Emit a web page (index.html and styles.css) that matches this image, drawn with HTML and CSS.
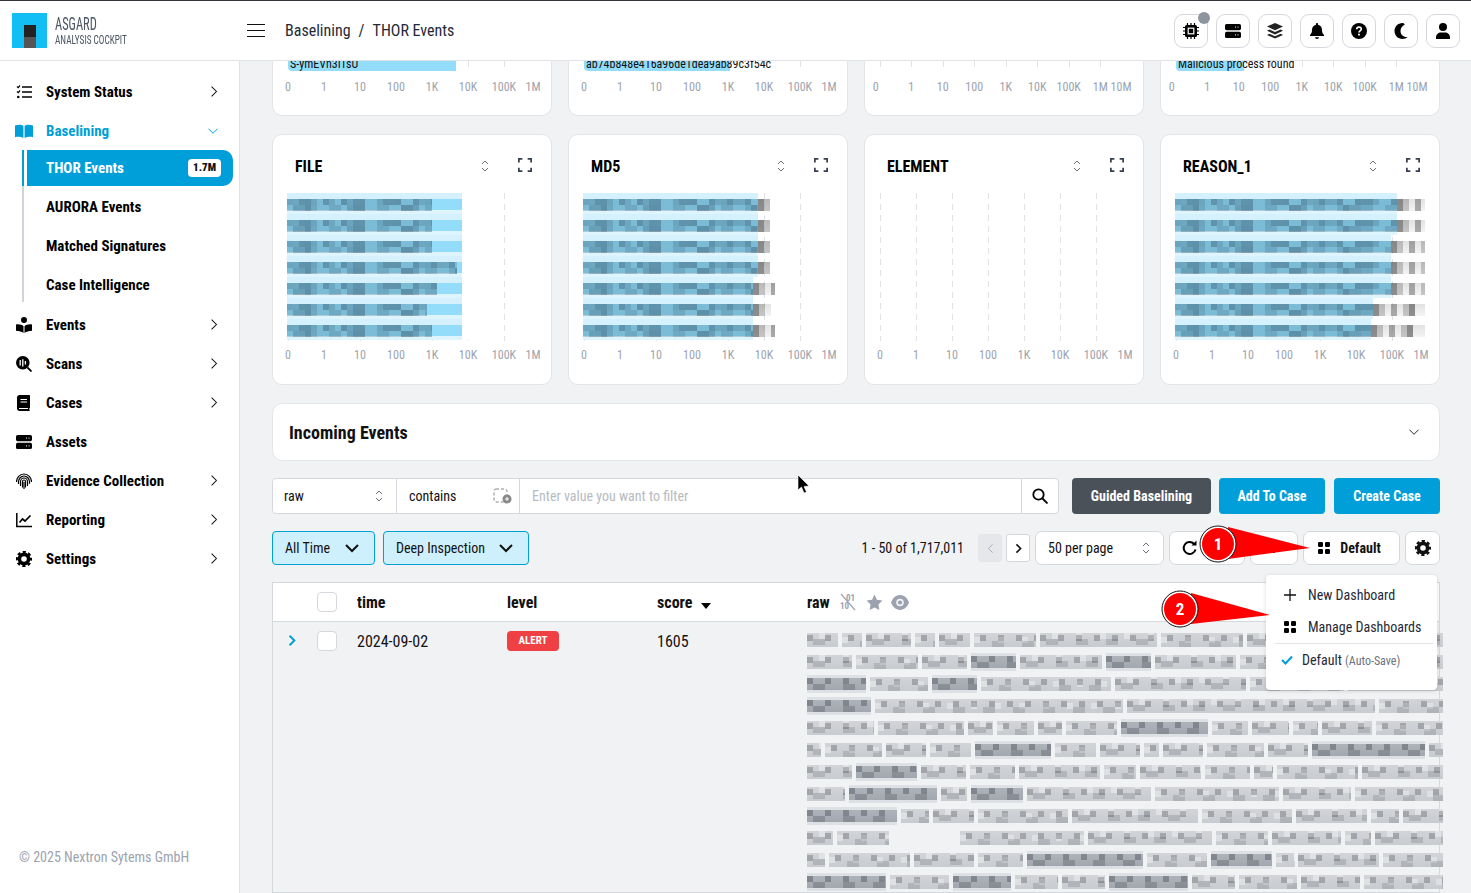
FILE: index.html
```html
<!DOCTYPE html>
<html lang="en">
<head>
  <meta charset="UTF-8">
  <title>Asgard Analysis Cockpit - THOR Events</title>
  <link rel="stylesheet" href="styles.css">
</head>
<body>
  <svg class="sprite" width="0" height="0">
    <symbol id="chev-right" viewBox="0 0 10 16"><path d="M2 2l6 6-6 6" fill="none" stroke="currentColor" stroke-width="1.3"/></symbol>
    <symbol id="chev-right-b" viewBox="0 0 10 16"><path d="M2 2l6 6-6 6" fill="none" stroke="currentColor" stroke-width="2.4"/></symbol>
    <symbol id="chev-down" viewBox="0 0 16 10"><path d="M2 2l6 6 6-6" fill="none" stroke="currentColor" stroke-width="1.3"/></symbol>
    <symbol id="chev-bold" viewBox="0 0 16 10"><path d="M2 2l6 6 6-6" fill="none" stroke="currentColor" stroke-width="2"/></symbol>
    <symbol id="updown" viewBox="0 0 10 16"><path d="M2 6l3-3 3 3M2 10l3 3 3-3" fill="none" stroke="currentColor" stroke-width="1"/></symbol>
    <symbol id="expand" viewBox="0 0 16 16"><path d="M1 5V1h4M11 1h4v4M15 11v4h-4M5 15H1v-4" fill="none" stroke="currentColor" stroke-width="2"/></symbol>
    <symbol id="gear" viewBox="0 0 16 16"><circle cx="8" cy="8" r="4.6" fill="none" stroke="currentColor" stroke-width="3.6"/><circle cx="8" cy="8" r="7" fill="none" stroke="currentColor" stroke-width="2.4" stroke-dasharray="3.1 2.4" stroke-dashoffset="1.5"/></symbol>
    <symbol id="server" viewBox="0 0 16 14"><rect x="0" y="0" width="16" height="6.2" rx="1.6" fill="currentColor"/><rect x="0" y="7.8" width="16" height="6.2" rx="1.6" fill="currentColor"/><path d="M10 3.1h1M12.5 3.1h1M10 10.9h1M12.5 10.9h1" stroke="#fff" stroke-width="1"/></symbol>
    <symbol id="grid" viewBox="0 0 12 12"><rect width="5" height="5" rx="1.2" fill="currentColor"/><rect x="7" width="5" height="5" rx="1.2" fill="currentColor"/><rect y="7" width="5" height="5" rx="1.2" fill="currentColor"/><rect x="7" y="7" width="5" height="5" rx="1.2" fill="currentColor"/></symbol>
  </svg>

  <header class="topbar">
    <div class="logo">
      <div class="logo-mark"><span></span></div>
      <div class="logo-text">
        <div class="logo-name">ASGARD</div>
        <div class="logo-sub">ANALYSIS COCKPIT</div>
      </div>
    </div>
    <div class="hamburger"><span></span><span></span><span></span></div>
    <div class="crumbs"><span>Baselining</span><span>/</span><span>THOR Events</span></div>
    <div class="top-actions">
      <button class="top-btn has-dot">
        <svg width="16" height="16" viewBox="0 0 16 16"><path d="M4.5 0v16M8 0v16M11.5 0v16M0 4.5h16M0 8h16M0 11.5h16" stroke="#000" stroke-width="1.2"/><rect x="2" y="2" width="12" height="12" rx="1.5" fill="#000"/><rect x="4.6" y="4.6" width="6.8" height="6.8" fill="#fff"/><rect x="5.8" y="5.8" width="4.4" height="4.4" fill="#000"/></svg>
      </button>
      <button class="top-btn"><svg width="16" height="14"><use href="#server"/></svg></button>
      <button class="top-btn">
        <svg width="16" height="16" viewBox="0 0 16 16"><path d="M8 0l8 3.6-8 3.6L0 3.6z" fill="#222"/><path d="M2.4 6.6L8 9.1l5.6-2.5L16 7.8l-8 3.6-8-3.6zM2.4 10.8L8 13.3l5.6-2.5 2.4 1.2L8 15.6 0 12z" fill="#222"/></svg>
      </button>
      <button class="top-btn">
        <svg width="14" height="16" viewBox="0 0 14 16"><path d="M7 0c.6 0 1 .4 1 1v.7c2.500.5 4 2.500 4 5 0 3 .8 4 2 5.300v1H0v-1c1.200-1.300 2-2.300 2-5.300 0-2.500 1.500-4.500 4-5V1c0-.6.4-1 1-1z" fill="#000"/><path d="M5 14.300h4a2 1.700 0 0 1-4 0z" fill="#000"/></svg>
      </button>
      <button class="top-btn">
        <svg width="16" height="16" viewBox="0 0 16 16"><circle cx="8" cy="8" r="8" fill="#000"/><path d="M5.700 6.200c0-1.300 1-2.100 2.300-2.100s2.300.8 2.300 2c0 1.800-2.300 1.700-2.300 3.400" fill="none" stroke="#fff" stroke-width="1.600"/><rect x="7.100" y="10.700" width="1.800" height="1.800" fill="#fff"/></svg>
      </button>
      <button class="top-btn">
        <svg width="14" height="16" viewBox="0 0 14 16"><path d="M8.500 0C4 0 .5 3.600.5 8s3.500 8 8 8c2 0 3.800-.8 5.200-2-4 .6-7.200-2.200-7.200-6 0-3 1.800-5.300 4.300-6.600C10 .5 9.300 0 8.500 0z" fill="#000"/></svg>
      </button>
      <button class="top-btn">
        <svg width="14" height="16" viewBox="0 0 14 16"><circle cx="7" cy="4" r="4" fill="#000"/><path d="M0 16v-1.500C0 11.500 2.300 9.500 5 9.500h4c2.700 0 5 2 5 5V16z" fill="#000"/></svg>
      </button>
    </div>
  </header>

  <div class="layout">
    <aside class="sidebar">
      <nav class="nav">
        <a class="nav-item">
          <svg class="nav-icon" viewBox="0 0 16 16"><path d="M1 2.500l1.200 1.200L4 1.500M1 7.500l1.200 1.200L4 6.500" fill="none" stroke="#000" stroke-width="1.200"/><circle cx="2.300" cy="13" r="1.300"/><path d="M6 3h10M6 8h10M6 13h10" stroke="#000" stroke-width="1.700"/></svg>
          <span>System Status</span>
          <svg class="nav-arrow"><use href="#chev-right"/></svg>
        </a>
        <a class="nav-item is-open">
          <svg class="nav-icon wide" viewBox="0 0 18 14"><path d="M0 1.500C3 .3 6.500.3 8.400 1.800V14C6 12.700 3 12.600 0 13.200zM18 1.500C15 .3 11.500.3 9.600 1.800V14c2.400-1.300 5.400-1.400 8.400-.8z" fill="#009fd9"/></svg>
          <span>Baselining</span>
          <svg class="nav-arrow down"><use href="#chev-down"/></svg>
        </a>
        <div class="subnav">
          <a class="sub-item active"><span>THOR Events</span><b class="count">1.7M</b></a>
          <a class="sub-item"><span>AURORA Events</span></a>
          <a class="sub-item"><span>Matched Signatures</span></a>
          <a class="sub-item"><span>Case Intelligence</span></a>
        </div>
        <a class="nav-item">
          <svg class="nav-icon" viewBox="0 0 16 16"><circle cx="8" cy="3" r="3"/><path d="M0 7.500c3-.5 6 .2 7.500 1.800V16C5.500 14.500 3 14 .8 14 .3 14 0 13.700 0 13.300zM16 7.500c-3-.5-6 .2-7.500 1.800V16c2-1.500 4.500-2 6.700-2 .5 0 .8-.3.800-.7z"/></svg>
          <span>Events</span>
          <svg class="nav-arrow"><use href="#chev-right"/></svg>
        </a>
        <a class="nav-item">
          <svg class="nav-icon" viewBox="0 0 16 16"><circle cx="6.800" cy="6.800" r="6.800"/><path d="M4.200 4v5.600M6.800 3.200v7.200M9.400 5v3.600" stroke="#fff" stroke-width="1.300"/><path d="M11.500 11.500l4 4" stroke="#000" stroke-width="1.800"/></svg>
          <span>Scans</span>
          <svg class="nav-arrow"><use href="#chev-right"/></svg>
        </a>
        <a class="nav-item">
          <svg class="nav-icon" viewBox="0 0 16 16"><path d="M3.500 0H13c.6 0 1 .4 1 1v11.500c0 .5-.3.800-.7 1v1.500c.4 0 .7.300.7.500s-.3.500-.7.500H3.500C2.100 16 1 14.900 1 13.500V2.500C1 1.100 2.100 0 3.500 0z"/><path d="M4.500 4.500h6.500M4.500 7h6.500" stroke="#fff" stroke-width="1.200"/><path d="M3 13.500h9" stroke="#fff" stroke-width="1"/></svg>
          <span>Cases</span>
          <svg class="nav-arrow"><use href="#chev-right"/></svg>
        </a>
        <a class="nav-item">
          <svg class="nav-icon"><use href="#server"/></svg>
          <span>Assets</span>
        </a>
        <a class="nav-item">
          <svg class="nav-icon" viewBox="0 0 16 16" fill="none" stroke="#000" stroke-width="1.200"><path d="M.5 9C.5 4.500 3.800 1 8 1s7.500 3.500 7.500 8"/><path d="M2.500 11V8.800C2.500 5.700 5 3 8 3s5.500 2.700 5.500 5.800v2"/><path d="M4.500 13V8.800C4.500 6.800 6 5 8 5s3.500 1.800 3.500 3.800V13"/><path d="M6.500 14.500V8.800C6.500 7.800 7.200 7 8 7s1.500.8 1.500 1.800V14.500"/><path d="M8 9v7"/></svg>
          <span>Evidence Collection</span>
          <svg class="nav-arrow"><use href="#chev-right"/></svg>
        </a>
        <a class="nav-item">
          <svg class="nav-icon" viewBox="0 0 16 16" fill="none" stroke="#000"><path d="M.8 1v13.500H16" stroke-width="1.500"/><path d="M3.500 10.500l3-3.500 2.500 2 5.500-5.500" stroke-width="1.700"/></svg>
          <span>Reporting</span>
          <svg class="nav-arrow"><use href="#chev-right"/></svg>
        </a>
        <a class="nav-item">
          <svg class="nav-icon"><use href="#gear"/></svg>
          <span>Settings</span>
          <svg class="nav-arrow"><use href="#chev-right"/></svg>
        </a>
      </nav>
      <div class="copyright">© 2025 Nextron Sytems GmbH</div>
    </aside>

    <main class="main">
      <section class="cards cards-top">
        <div class="card card-cut">
          <div class="plot"><div class="cut-bar bar-a">S-ymEVn3ITsU</div></div>
          <div class="axis"><span>0</span><span>1</span><span>10</span><span>100</span><span>1K</span><span>10K</span><span>100K</span><span>1M</span></div>
        </div>
        <div class="card card-cut">
          <div class="plot"><div class="cut-bar bar-b">ab74b848e416a96de1dea9ab89c3f54c</div></div>
          <div class="axis"><span>0</span><span>1</span><span>10</span><span>100</span><span>1K</span><span>10K</span><span>100K</span><span>1M</span></div>
        </div>
        <div class="card card-cut">
          <div class="plot tight"></div>
          <div class="axis tight"><span>0</span><span>1</span><span>10</span><span>100</span><span>1K</span><span>10K</span><span>100K</span><span>1M</span><span>10M</span></div>
        </div>
        <div class="card card-cut">
          <div class="plot tight"><div class="cut-bar bar-c">Malicious process found</div></div>
          <div class="axis tight"><span>0</span><span>1</span><span>10</span><span>100</span><span>1K</span><span>10K</span><span>100K</span><span>1M</span><span>10M</span></div>
        </div>
      </section>

      <section class="cards">
        <div class="card">
          <div class="card-head">
            <h3>FILE</h3>
            <svg class="sort"><use href="#updown"/></svg>
            <svg class="expand"><use href="#expand"/></svg>
          </div>
          <div class="plot tall">
            <div class="bars masked">
              <div class="bar"><div class="fill" style="width:175px"><i style="width:145px"></i></div></div>
              <div class="bar"><div class="fill" style="width:175px"><i style="width:145px"></i></div></div>
              <div class="bar"><div class="fill" style="width:175px"><i style="width:145px"></i></div></div>
              <div class="bar"><div class="fill" style="width:175px"><i style="width:170px"></i></div></div>
              <div class="bar"><div class="fill" style="width:175px"><i style="width:150px"></i></div></div>
              <div class="bar"><div class="fill" style="width:175px"><i style="width:140px"></i></div></div>
              <div class="bar"><div class="fill" style="width:175px"><i style="width:145px"></i></div></div>
            </div>
          </div>
          <div class="axis"><span>0</span><span>1</span><span>10</span><span>100</span><span>1K</span><span>10K</span><span>100K</span><span>1M</span></div>
        </div>

        <div class="card">
          <div class="card-head">
            <h3>MD5</h3>
            <svg class="sort"><use href="#updown"/></svg>
            <svg class="expand"><use href="#expand"/></svg>
          </div>
          <div class="plot tall">
            <div class="bars">
              <div class="bar"><div class="fill" style="width:175px"><i style="width:175px"></i></div><div class="tail" style="width:12px"></div></div>
              <div class="bar"><div class="fill" style="width:175px"><i style="width:175px"></i></div><div class="tail" style="width:12px"></div></div>
              <div class="bar"><div class="fill" style="width:175px"><i style="width:175px"></i></div><div class="tail" style="width:12px"></div></div>
              <div class="bar"><div class="fill" style="width:175px"><i style="width:175px"></i></div><div class="tail" style="width:12px"></div></div>
              <div class="bar"><div class="fill" style="width:170px"><i style="width:170px"></i></div><div class="tail" style="width:22px"></div></div>
              <div class="bar"><div class="fill" style="width:170px"><i style="width:170px"></i></div><div class="tail" style="width:18px"></div></div>
              <div class="bar"><div class="fill" style="width:170px"><i style="width:170px"></i></div><div class="tail" style="width:22px"></div></div>
            </div>
          </div>
          <div class="axis"><span>0</span><span>1</span><span>10</span><span>100</span><span>1K</span><span>10K</span><span>100K</span><span>1M</span></div>
        </div>

        <div class="card">
          <div class="card-head">
            <h3>ELEMENT</h3>
            <svg class="sort"><use href="#updown"/></svg>
            <svg class="expand"><use href="#expand"/></svg>
          </div>
          <div class="plot tall"></div>
          <div class="axis"><span>0</span><span>1</span><span>10</span><span>100</span><span>1K</span><span>10K</span><span>100K</span><span>1M</span></div>
        </div>

        <div class="card">
          <div class="card-head">
            <h3>REASON_1</h3>
            <svg class="sort"><use href="#updown"/></svg>
            <svg class="expand"><use href="#expand"/></svg>
          </div>
          <div class="plot tall">
            <div class="bars">
              <div class="bar"><div class="fill" style="width:222px"><i style="width:222px"></i></div><div class="tail" style="width:28px"></div></div>
              <div class="bar"><div class="fill" style="width:222px"><i style="width:222px"></i></div><div class="tail" style="width:28px"></div></div>
              <div class="bar"><div class="fill" style="width:216px"><i style="width:216px"></i></div><div class="tail" style="width:34px"></div></div>
              <div class="bar"><div class="fill" style="width:216px"><i style="width:216px"></i></div><div class="tail" style="width:34px"></div></div>
              <div class="bar"><div class="fill" style="width:216px"><i style="width:216px"></i></div><div class="tail" style="width:34px"></div></div>
              <div class="bar"><div class="fill" style="width:198px"><i style="width:198px"></i></div><div class="tail" style="width:52px"></div></div>
              <div class="bar"><div class="fill" style="width:196px"><i style="width:196px"></i></div><div class="tail" style="width:54px"></div></div>
            </div>
          </div>
          <div class="axis"><span>0</span><span>1</span><span>10</span><span>100</span><span>1K</span><span>10K</span><span>100K</span><span>1M</span></div>
        </div>
      </section>

      <section class="incoming">
        <h2>Incoming Events</h2>
        <svg class="incoming-chev"><use href="#chev-down"/></svg>
      </section>

      <section class="filter-row">
        <div class="filter">
          <div class="filter-field field-a"><span>raw</span><svg class="sort"><use href="#updown"/></svg></div>
          <div class="filter-field field-b">
            <span>contains</span>
            <svg class="add-icon" width="20" height="16" viewBox="0 0 20 16"><rect x="1" y="1" width="13" height="13" rx="2" fill="none" stroke="#888" stroke-dasharray="3 2"/><circle cx="14" cy="11" r="4.500" fill="#888"/><path d="M12 11h4M14 9v4" stroke="#fff"/></svg>
          </div>
          <div class="filter-input">Enter value you want to filter</div>
          <div class="filter-search">
            <svg width="16" height="16" viewBox="0 0 16 16" fill="none" stroke="#000" stroke-width="1.800"><circle cx="6.500" cy="6.500" r="5.200"/><path d="M10.500 10.500l5 5"/></svg>
          </div>
        </div>
        <button class="action dark guided">Guided Baselining</button>
        <button class="action add">Add To Case</button>
        <button class="action create">Create Case</button>
      </section>

      <section class="tool-row">
        <button class="pick pick-time"><span>All Time</span><svg><use href="#chev-bold"/></svg></button>
        <button class="pick pick-deep"><span>Deep Inspection</span><svg><use href="#chev-bold"/></svg></button>
        <div class="pager">1 - 50 of 1,717,011</div>
        <button class="page-btn off"><svg><use href="#chev-right"/></svg></button>
        <button class="page-btn"><svg><use href="#chev-right-b"/></svg></button>
        <div class="tool per-page"><span>50 per page</span><svg class="sort"><use href="#updown"/></svg></div>
        <div class="tool reload">
          <svg width="16" height="16" viewBox="0 0 16 16" fill="none" stroke="#000" stroke-width="2"><path d="M13.500 9.500A6 6 0 1 1 12 3.800"/><path d="M14.500 .5v5h-5" fill="#000" stroke="none"/></svg>
        </div>
        <div class="tool more"><svg><use href="#chev-bold"/></svg></div>
        <div class="tool dash"><svg class="grid-icon"><use href="#grid"/></svg><b>Default</b></div>
        <div class="tool cog"><svg><use href="#gear"/></svg></div>
      </section>

      <section class="table">
        <div class="t-head">
          <div></div>
          <div><span class="check"></span></div>
          <div>time</div>
          <div>level</div>
          <div>score <svg class="caret" width="10" height="6" viewBox="0 0 10 6"><path d="M0 0h10L5 6z" fill="#000"/></svg></div>
          <div class="raw-head">raw
            <svg width="20" height="18" viewBox="0 0 20 18"><text x="8" y="8" class="bin">01</text><text x="2" y="16" class="bin">10</text><path d="M3 1l14 16" stroke="#9ca3af" stroke-width="1.200"/></svg>
            <svg width="17" height="17" viewBox="0 0 16 16"><path d="M8 .5l2.300 4.900 5.200.7-3.800 3.700.9 5.300L8 12.600l-4.600 2.500.9-5.300L.5 6.100l5.200-.7z" fill="#9ca3af"/></svg>
            <svg width="18" height="15" viewBox="0 0 17 14"><path d="M8.500 0C4.500 0 1.500 3 0 7c1.500 4 4.500 7 8.500 7s7-3 8.500-7c-1.500-4-4.500-7-8.500-7z" fill="#9ca3af"/><circle cx="8.500" cy="7" r="3.600" fill="#f1f2f4"/><circle cx="8.500" cy="7" r="2" fill="#9ca3af"/></svg>
          </div>
        </div>
        <div class="t-row">
          <div class="expander"><svg><use href="#chev-right-b"/></svg></div>
          <div><span class="check"></span></div>
          <div>2024-09-02</div>
          <div><span class="badge">ALERT</span></div>
          <div>1605</div>
          <div class="raw-cell">
            <div class="line"><i class="w2"></i><i class="w1"></i><i class="w3"></i><i class="w1"></i><i class="w2"></i><i class="w4"></i><i class="w6"></i><i class="w5"></i><i class="w3"></i><i class="w4"></i><i class="w5"></i></div>
            <div class="line"><i class="w3"></i><i class="w4"></i><i class="w3"></i><i class="hi w3"></i><i class="w5"></i><i class="hi w3"></i><i class="w5"></i><i class="w6"></i><i class="w5"></i></div>
            <div class="line"><i class="hi w3"></i><i class="w3"></i><i class="hi w2"></i><i class="w6"></i><i class="w6"></i><i class="w5"></i><i class="w5"></i></div>
            <div class="line"><i class="hi w4"></i><i class="w7"></i><i class="w7"></i><i class="w4"></i></div>
            <div class="line"><i class="w4"></i><i class="w5"></i><i class="w1"></i><i class="w2"></i><i class="w1"></i><i class="w3"></i><i class="hi w5"></i><i class="w2"></i><i class="w2"></i><i class="w1"></i><i class="w3"></i><i class="w4"></i></div>
            <div class="line"><i class="w1"></i><i class="w4"></i><i class="w3"></i><i class="w3"></i><i class="hi w5"></i><i class="w3"></i><i class="w3"></i><i class="w1"></i><i class="w3"></i><i class="w4"></i><i class="w3"></i><i class="hi w6"></i><i class="w1"></i></div>
            <div class="line"><i class="w3"></i><i class="hi w4"></i><i class="w3"></i><i class="w3"></i><i class="w5"></i><i class="w2"></i><i class="w4"></i><i class="w3"></i><i class="w1"></i><i class="w5"></i><i class="w5"></i></div>
            <div class="line"><i class="w2"></i><i class="hi w5"></i><i class="w1"></i><i class="hi w3"></i><i class="w6"></i><i class="w6"></i><i class="w4"></i><i class="w5"></i></div>
            <div class="line"><i class="hi w5"></i><i class="w1"></i><i class="w2"></i><i class="w5"></i><i class="w6"></i><i class="w5"></i><i class="w4"></i><i class="w1"></i><i class="w2"></i></div>
            <div class="line"><i class="w1"></i><i class="w3"></i><i class="gap"></i><i class="w6"></i><i class="w6"></i><i class="w3"></i><i class="w4"></i><i class="w1"></i><i class="w4"></i></div>
            <div class="line"><i class="w1"></i><i class="w5"></i><i class="w4"></i><i class="w3"></i><i class="hi w6"></i><i class="w4"></i><i class="hi w4"></i><i class="w1"></i><i class="w5"></i><i class="w4"></i></div>
            <div class="line"><i class="hi w5"></i><i class="w4"></i><i class="hi w4"></i><i class="w3"></i><i class="w3"></i><i class="hi w5"></i><i class="w3"></i><i class="w4"></i><i class="w4"></i><i class="w5"></i></div>
          </div>
        </div>
      </section>
    </main>
  </div>

  <div class="dash-menu">
    <div class="menu-item"><svg width="12" height="12" viewBox="0 0 12 12"><path d="M6 0v12M0 6h12" stroke="#111" stroke-width="1.300"/></svg><span>New Dashboard</span></div>
    <div class="menu-item"><svg class="grid-icon"><use href="#grid"/></svg><span>Manage Dashboards</span></div>
    <div class="menu-default">
      <svg width="12" height="10" viewBox="0 0 12 10"><path d="M1 5l3.500 3.500L11 1.500" fill="none" stroke="#009fd9" stroke-width="2"/></svg>
      <span>Default <small>(Auto-Save)</small></span>
    </div>
  </div>

  <!-- hand drawn annotations from the screenshot -->
  <svg class="callouts" width="1471" height="893" viewBox="0 0 1471 893">
    <polygon points="1228,527 1310,548 1228,559" fill="#f00"/>
    <circle cx="1218" cy="544" r="17" fill="#f00" stroke="#fff" stroke-width="2"/>
    <circle cx="1218" cy="544" r="18" fill="none" stroke="#111" stroke-width="1"/>
    <text x="1218" y="550" class="callout-num">1</text>
    <polygon points="1191,593 1270,615 1191,624" fill="#f00"/>
    <circle cx="1180" cy="609" r="17" fill="#f00" stroke="#fff" stroke-width="2"/>
    <circle cx="1180" cy="609" r="18" fill="none" stroke="#111" stroke-width="1"/>
    <text x="1180" y="615" class="callout-num">2</text>
    <path d="M798 475v15l3.500-3 2.500 6 2.500-1-2.500-5.500 5-.5z" fill="#000" stroke="#fff" stroke-width=".6"/>
  </svg>
</body>
</html>
```

FILE: styles.css
```css
* {
  box-sizing: border-box;
}

html,
body {
  height: 100%;
}

body {
  display: flex;
  flex-direction: column;
  width: 1471px;
  height: 893px;
  margin: 0;
  overflow: hidden;
  position: relative;
  background: #f1f2f4;
  color: #111;
  font-family: "Roboto Condensed", Roboto, "Liberation Sans Narrow", sans-serif;
  font-stretch: condensed;
  font-size: 14px;
}

button {
  font: inherit;
  font-stretch: inherit;
  cursor: pointer;
}

.sprite {
  position: absolute;
}

/* top bar */
.topbar {
  display: flex;
  align-items: center;
  height: 61px;
  flex: none;
  padding-left: 12px;
  background: #fff;
  border-top: 1px solid #33363b;
  border-bottom: 1px solid #e0e2e6;
}

.logo {
  display: flex;
  align-items: center;
  gap: 8px;
  width: 235px;
}

.logo-mark {
  display: flex;
  align-items: flex-end;
  justify-content: center;
  width: 35px;
  height: 35px;
  background: #13bef5;
}

.logo-mark span {
  width: 12px;
  height: 23px;
  background: linear-gradient(#222 0 12px, #555 12px);
}

.logo-text {
  color: #4b5563;
  font-family: "Liberation Sans Narrow", "Roboto Condensed", Roboto, sans-serif;
}

.logo-name {
  font-size: 18px;
  line-height: 18px;
  transform: scaleX(.69);
  transform-origin: left;
}

.logo-sub {
  font-size: 12.500px;
  line-height: 14px;
  transform: scaleX(.74);
  transform-origin: left;
}

.hamburger {
  display: flex;
  flex-direction: column;
  gap: 5px;
  width: 18px;
}

.hamburger span {
  height: 1px;
  border-top: 1.500px solid #111;
}

.crumbs {
  display: flex;
  gap: 8px;
  margin-left: 20px;
  font-size: 16px;
  color: #1f2937;
}

.top-actions {
  display: flex;
  gap: 8px;
  margin-left: auto;
  padding-right: 11px;
}

.top-btn {
  display: flex;
  align-items: center;
  justify-content: center;
  position: relative;
  width: 34px;
  height: 34px;
  padding: 0;
  background: #fff;
  border: 1px solid #d5d8dd;
  border-radius: 9px;
}

.has-dot::after {
  content: "";
  position: absolute;
  top: -3px;
  right: -3px;
  width: 12px;
  height: 12px;
  background: #8e95a0;
  border-radius: 50%;
}

/* sidebar */
.layout {
  display: flex;
  flex: 1;
  min-height: 0;
}

.sidebar {
  display: flex;
  flex-direction: column;
  flex: none;
  width: 240px;
  padding: 11px 0 28px;
  background: #fff;
  border-right: 1px solid #e0e2e6;
}

.nav-item,
.sub-item {
  display: flex;
  align-items: center;
  height: 39px;
  color: #000;
  font-size: 15px;
  font-weight: 700;
}

.nav-item {
  padding-left: 16px;
}

.nav-item > span {
  flex: 1;
  margin-left: 14px;
}

.nav-icon {
  width: 16px;
  height: 16px;
  flex: none;
  color: #000;
}

.nav-icon.wide {
  width: 18px;
  margin-left: -1px;
  margin-right: -1px;
}

.nav-arrow {
  width: 8px;
  height: 13px;
  margin-right: 21px;
  color: #111;
}

.nav-arrow.down {
  width: 12px;
  height: 8px;
  margin-right: 20px;
  color: #009fd9;
}

.is-open > span {
  color: #009fd9;
}

.subnav {
  display: flex;
  flex-direction: column;
  height: 152px;
  margin: 0 0 3px 22px;
  border-left: 2px solid #d1d5db;
}

.sub-item {
  padding-left: 22px;
  flex: none;
}

.sub-item.active {
  justify-content: space-between;
  height: 36px;
  margin: 0 6px 1px -2px;
  padding: 0 12px 0 19px;
  color: #fff;
  background: #009fd9;
  border-left: 2px solid #009fd9;
  box-shadow: inset 3px 0 0 #fff;
  border-radius: 0 10px 10px 0;
}

.sub-item.active span {
  margin-left: 3px;
}

.count {
  padding: 2px 5px;
  color: #111;
  font-size: 11px;
  line-height: 14px;
  background: #fff;
  border-radius: 4px;
}

.copyright {
  margin-top: auto;
  padding-left: 19px;
  color: #9ca3af;
  font-size: 14px;
}

/* main column */
.main {
  display: flex;
  flex-direction: column;
  flex: 1;
  min-width: 0;
  padding: 0 31px 0 32px;
  overflow: hidden;
}

.cards {
  display: grid;
  grid-template-columns: repeat(4, 280px);
  gap: 16px;
  flex: none;
}

.cards-top {
  margin-bottom: 18px;
}

.card {
  height: 251px;
  padding: 0 12px 0 13px;
  background: #fff;
  border: 1px solid #e3e5e9;
  border-radius: 10px;
}

.card-cut {
  height: 55px;
  border-top: 0;
  border-radius: 0 0 10px 10px;
  overflow: hidden;
}

.card-head {
  display: flex;
  align-items: center;
  height: 58px;
  padding: 4px 0 0 9px;
}

.card-head h3 {
  flex: 1;
  margin: 0;
  font-size: 16px;
  font-weight: 700;
  color: #000;
}

.card-head .sort {
  margin-right: 1px;
}

.sort {
  width: 10px;
  height: 16px;
  color: #6b7280;
}

.expand {
  width: 14px;
  height: 14px;
  margin: 0 7px 2px 27px;
  color: #374151;
}

/* dashed scale lines behind the bars */
.plot {
  position: relative;
  height: 10px;
}

.plot.tall {
  height: 148px;
}

.plot::before {
  content: "";
  position: absolute;
  top: 0;
  bottom: 0;
  left: 2px;
  right: 0;
  background: repeating-linear-gradient(to right, #dfe2e6 0 1px, transparent 1px 36px);
  -webkit-mask: repeating-linear-gradient(to bottom, #000 0 6px, transparent 6px 11px);
  mask: repeating-linear-gradient(to bottom, #000 0 6px, transparent 6px 11px);
}

.plot.tight::before {
  background: repeating-linear-gradient(to right, #dfe2e6 0 1px, transparent 1px 31.500px);
}

.cut-bar {
  position: relative;
  height: 10px;
  margin-left: 2px;
  padding-left: 2px;
  color: #111;
  font-size: 12px;
  line-height: 6px;
  white-space: nowrap;
  border-radius: 0 0 4px 4px;
}

.bar-a {
  background: linear-gradient(to right, #93ddfa 168px, transparent 168px);
}

.bar-b {
  background: linear-gradient(to right, #93ddfa 146px, transparent 146px);
}

.bar-c {
  background: linear-gradient(to right, #93ddfa 68px, transparent 68px);
}

.axis {
  display: flex;
  margin: 9px 0 0 -16px;
  color: #9ca3af;
  font-size: 12px;
  line-height: 14px;
}

.plot.tall + .axis {
  margin-top: 7px;
}

.axis span {
  flex: none;
  width: 36px;
  text-align: center;
}

.axis span:last-child {
  width: 22px;
}

.axis.tight {
  margin-left: -14px;
}

.axis.tight span {
  width: 31.500px;
}

.axis.tight span:first-child {
  width: 35.500px;
  margin-left: -4px;
  padding-right: 4px;
}

.axis.tight span:last-child {
  width: 22px;
  margin-left: -6px;
}

.bars {
  position: relative;
  filter: blur(.4px);
}

.bars.masked {
  width: 215px;
  background: #fff;
}

.bar {
  display: flex;
  height: 21px;
  margin-left: 1px;
}

.fill {
  height: 21px;
  background:
    linear-gradient(rgba(255, 255, 255, .6) 0 6px, transparent 6px 17px, rgba(255, 255, 255, .7) 17px),
    #93ddfa;
}

/* pixelated text laid on a bar */
.fill i {
  display: block;
  height: 12px;
  position: relative;
  top: 6px;
  background-image:
    repeating-linear-gradient(90deg, rgba(35, 60, 80, .18) 0 6px, transparent 6px 18px),
    repeating-linear-gradient(90deg, rgba(35, 60, 80, .16) 0 12px, transparent 12px 30px),
    repeating-linear-gradient(90deg, rgba(35, 60, 80, .18) 0 18px, transparent 18px 42px),
    repeating-linear-gradient(90deg, transparent 0 6px, rgba(35, 60, 80, .22) 6px 24px, transparent 24px 54px),
    repeating-linear-gradient(90deg, rgba(35, 60, 80, .15) 0 12px, transparent 12px 24px),
    linear-gradient(rgba(60, 100, 120, .28), rgba(60, 100, 120, .28));
  background-position: 0 0, 6px 0, 12px 0, 0 6px, 18px 6px, 0 0;
  background-repeat: no-repeat;
  background-size: 100% 6px, 100% 6px, 100% 6px, 100% 6px, 100% 6px, 100% 12px;
}

.tail {
  height: 12px;
  margin-top: 6px;
  background-image:
    repeating-linear-gradient(90deg, rgba(60, 60, 60, .4) 0 6px, transparent 6px 18px),
    repeating-linear-gradient(90deg, rgba(60, 60, 60, .25) 0 12px, transparent 12px 30px),
    linear-gradient(rgba(190, 190, 190, .45), rgba(235, 235, 235, .6));
}

/* incoming events */
.incoming {
  display: flex;
  align-items: center;
  justify-content: space-between;
  flex: none;
  height: 58px;
  padding: 0 19px 0 16px;
  background: #fff;
  border: 1px solid #e3e5e9;
  border-radius: 10px;
}

.cards + .incoming {
  margin-top: 18px;
}

.incoming h2 {
  margin: 0;
  font-size: 18px;
  font-weight: 700;
  color: #111;
}

.incoming-chev {
  width: 12px;
  height: 8px;
  color: #222;
}

/* filter row */
.filter-row {
  display: flex;
  flex: none;
  height: 36px;
  margin-top: 17px;
  gap: 8px;
}

.filter {
  display: flex;
  width: 787px;
  margin-right: 5px;
  background: #fff;
  border: 1px solid #d5d8dd;
  border-radius: 4px;
}

.filter-field {
  display: flex;
  align-items: center;
  justify-content: space-between;
  padding: 0 12px 0 11px;
  border-right: 1px solid #d5d8dd;
}

.field-a {
  width: 124px;
}

.field-b {
  width: 123px;
  padding: 0 6px 0 12px;
}

.filter-input {
  flex: 1;
  padding: 0 12px;
  color: #b6bbc3;
  font-size: 14px;
  line-height: 34px;
}

.filter-search {
  display: flex;
  align-items: center;
  justify-content: center;
  width: 37px;
  border-left: 1px solid #d5d8dd;
}

.action {
  color: #fff;
  font-weight: 700;
  font-size: 14px;
  background: #009fd9;
  border: 0;
  border-radius: 4px;
}

.action.dark {
  background: #4b5159;
}

.guided {
  width: 139px;
}

.add {
  width: 106px;
  margin-right: 1px;
}

.create {
  width: 106px;
}

/* tool row */
.tool-row {
  display: flex;
  align-items: center;
  flex: none;
  height: 34px;
  margin-top: 17px;
}

.pick {
  display: flex;
  align-items: center;
  justify-content: space-between;
  height: 34px;
  padding: 0 14px 0 12px;
  color: #111;
  background: #cdf0fc;
  border: 1px solid #009fd9;
  border-radius: 4px;
}

.pick svg {
  width: 16px;
  height: 10px;
}

.pick-time {
  width: 103px;
  margin-right: 8px;
}

.pick-deep {
  width: 146px;
}

.pager {
  margin-left: auto;
  margin-right: 14px;
}

.page-btn {
  display: flex;
  align-items: center;
  justify-content: center;
  width: 24px;
  height: 28px;
  margin-right: 4px;
  padding: 0;
  background: #fff;
  border: 1px solid #d5d8dd;
  border-radius: 3px;
}

.page-btn svg {
  width: 7px;
  height: 11px;
  color: #111;
}

.page-btn.off {
  background: #e5e7ea;
  border-color: #e5e7ea;
}

.page-btn.off svg {
  color: #9ca3af;
  transform: scaleX(-1);
}

.tool {
  display: flex;
  align-items: center;
  justify-content: center;
  height: 34px;
  margin-left: 5px;
  background: #fff;
  border: 1px solid #d5d8dd;
  border-radius: 7px;
}

.per-page {
  justify-content: space-between;
  width: 129px;
  margin-left: 1px;
  padding: 0 12px;
}

.reload {
  width: 76px;
  margin-left: 5px;
  padding-right: 34px;
}

.more {
  width: 48px;
}

.more svg {
  width: 8px;
  height: 5px;
  margin-top: 6px;
}

.dash {
  width: 97px;
  gap: 10px;
  padding-right: 4px;
}

.cog {
  width: 35px;
}

.cog svg {
  width: 16px;
  height: 16px;
}

.grid-icon {
  width: 12px;
  height: 12px;
  color: #000;
}

/* events table */
.table {
  flex: 1;
  margin-top: 17px;
  border: 1px solid #d5d8dd;
  font-size: 16px;
}

.t-head,
.t-row {
  display: grid;
  grid-template-columns: 44px 40px 150px 150px 150px 1fr;
}

.t-head {
  align-items: center;
  height: 39px;
  font-weight: 700;
  color: #111;
  background: #fff;
  border-bottom: 1px solid #d5d8dd;
}

.t-head > div,
.t-row > div {
  white-space: nowrap;
}

.caret {
  margin-left: 5px;
  vertical-align: -1px;
}

.raw-head {
  display: flex;
  align-items: center;
  gap: 8px;
}

.bin {
  fill: #9ca3af;
  font-size: 9px;
  font-weight: 700;
}

.check {
  display: block;
  width: 20px;
  height: 20px;
  background: #fff;
  border: 1px solid #d5d8dd;
  border-radius: 4px;
}

.t-row {
  padding-top: 9px;
  line-height: 22px;
}

.expander {
  padding-left: 15px;
}

.expander svg {
  width: 8px;
  height: 13px;
  margin-top: 3px;
  color: #009fd9;
}

.badge {
  display: block;
  width: 52px;
  height: 20px;
  color: #fff;
  font-size: 11px;
  font-weight: 700;
  line-height: 20px;
  text-align: center;
  background: #ef4044;
  border-radius: 4px;
}

/* pixelated raw log text */
.raw-cell {
  display: flex;
  flex-direction: column;
  gap: 4px;
  width: 636px;
  height: 260px;
  overflow: hidden;
  filter: blur(.5px);
}

.line {
  display: flex;
  flex: none;
  gap: 4px;
  height: 18px;
  overflow: hidden;
}

.line i {
  display: block;
  flex: 1 0 auto;
  height: 18px;
  background-image:
    repeating-linear-gradient(90deg, rgba(60, 64, 70, .3) 0 6px, transparent 6px 18px),
    repeating-linear-gradient(90deg, rgba(60, 64, 70, .18) 0 12px, transparent 12px 30px),
    repeating-linear-gradient(90deg, rgba(255, 255, 255, .35) 0 6px, transparent 6px 24px),
    linear-gradient(#d2d4d8, #c8cbcf);
  background-size: 100% 6px, 100% 6px, 100% 6px, 100% 14px;
  background-position: 0 4px, 6px 8px, 12px 2px, 0 2px;
  background-repeat: no-repeat;
}

.line i:nth-child(even) {
  background-position: 6px 4px, 18px 10px, 0 6px, 0 2px;
}

.line i.hi {
  background-image:
    repeating-linear-gradient(90deg, rgba(50, 56, 66, .35) 0 6px, transparent 6px 18px),
    repeating-linear-gradient(90deg, rgba(50, 56, 66, .25) 0 12px, transparent 12px 30px),
    linear-gradient(#aeb3ba, #a3a8b0),
    linear-gradient(#dde1e6, #dde1e6);
  background-size: 100% 6px, 100% 6px, 100% 12px, 100% 18px;
  background-position: 0 3px, 6px 9px, 0 3px, 0 0;
}

.w1 { width: 14px; }
.w2 { width: 26px; }
.w3 { width: 40px; }
.w4 { width: 56px; }
.w5 { width: 76px; }
.w6 { width: 112px; }
.w7 { width: 240px; }
.line i.gap { width: 50px; background: none; }

/* dashboards menu */
.dash-menu {
  position: absolute;
  top: 575px;
  left: 1266px;
  width: 171px;
  height: 115px;
  padding-top: 4px;
  background: #fff;
  border-radius: 4px;
  box-shadow: 0 1px 4px rgba(0, 0, 0, .14);
}

.menu-item {
  display: flex;
  align-items: center;
  gap: 12px;
  height: 32px;
  padding-left: 18px;
  color: #1f2937;
  font-size: 14px;
}

.menu-default {
  display: flex;
  align-items: center;
  gap: 9px;
  height: 32px;
  margin: 0 4px 0 9px;
  padding-left: 6px;
  border-top: 1px solid #dfe2e6;
  color: #1f2937;
  font-size: 14px;
}

.menu-default small {
  color: #6b7280;
  font-size: 12px;
}

/* annotations */
.callouts {
  position: absolute;
  top: 0;
  left: 0;
  pointer-events: none;
}

.callout-num {
  fill: #fff;
  font-family: Roboto, sans-serif;
  font-size: 17px;
  font-weight: 700;
  text-anchor: middle;
}
```
